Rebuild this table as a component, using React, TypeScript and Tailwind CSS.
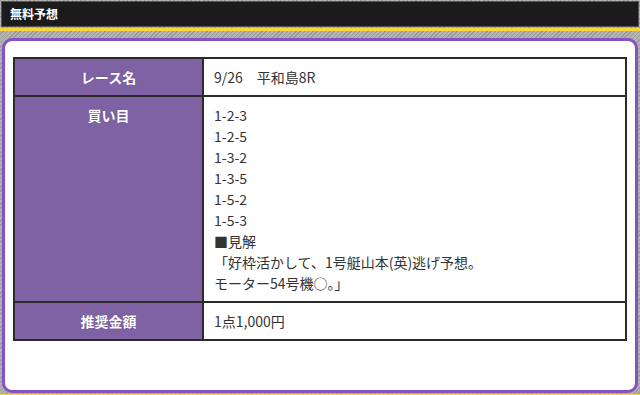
const BETS = ["1-2-3", "1-2-5", "1-3-2", "1-3-5", "1-5-2", "1-5-3"];

const FONT = `font-["Hiragino_Kaku_Gothic_ProN","Noto_Sans_CJK_JP",sans-serif]`;

function HeadCell({ children }: { children: React.ReactNode }) {
  return (
    <th className="w-[189px] border-2 border-[#2a2a2a] bg-[#7e62a3] px-2.5 pt-2 pb-[7px] align-top text-center text-[14px] leading-[21px] font-bold text-white [text-shadow:0_0_1px_rgba(0,0,0,0.35)]">
      {children}
    </th>
  );
}

function ValueCell({ children }: { children: React.ReactNode }) {
  return (
    <td className="border-2 border-[#2a2a2a] bg-white px-2.5 pt-2 pb-[7px] align-top text-[14px] leading-[21px] text-[#333]">
      {children}
    </td>
  );
}

export default function App() {
  return (
    <div
      className={`h-[395px] w-[640px] overflow-hidden bg-[repeating-linear-gradient(135deg,#9a9a9a_0px,#9a9a9a_1px,#b4b4b4_1px,#b4b4b4_3px)] ${FONT}`}
    >
      {/* section title bar */}
      <div className="px-px pt-px">
        <div className="flex h-[26px] items-center border border-[#555] bg-[#1b1b1b] px-2 text-[12px] font-bold text-white">
          無料予想
        </div>
      </div>
      <div className="mt-[1px] h-[3px] bg-[#f6d63c]" />

      {/* content card */}
      <div className="px-[2px] pt-[7px]">
        <div className="h-[355px] rounded-[10px] border-[3px] border-[#8650c8] bg-white px-[8px] pt-[16px]">
          <table className="w-full border-collapse">
            <tbody>
              <tr>
                <HeadCell>レース名</HeadCell>
                <ValueCell>9/26　平和島8R</ValueCell>
              </tr>
              <tr>
                <HeadCell>買い目</HeadCell>
                <ValueCell>
                  {BETS.map((b) => (
                    <div key={b}>{b}</div>
                  ))}
                  <div>■見解</div>
                  <div>「好枠活かして、1号艇山本(英)逃げ予想。</div>
                  <div>モーター54号機○。」</div>
                </ValueCell>
              </tr>
              <tr>
                <HeadCell>推奨金額</HeadCell>
                <ValueCell>1点1,000円</ValueCell>
              </tr>
            </tbody>
          </table>
        </div>
      </div>
      <div className="mt-px h-[3px] bg-[#f6d63c]" />
    </div>
  );
}
